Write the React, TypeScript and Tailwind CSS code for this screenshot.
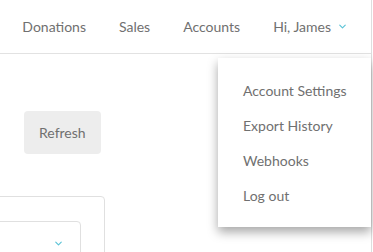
import { ChevronDown } from "lucide-react";

const navItems = ["Donations", "Sales", "Accounts"];
const menuItems = ["Account Settings", "Export History", "Webhooks", "Log out"];

export default function App() {
  return (
    <div
      className="relative h-[252px] w-[373px] overflow-hidden bg-white text-[#707070]"
      style={{ fontFamily: "Lato, 'Open Sans', sans-serif" }}
    >
      <div className="border-r border-[#dedede] h-full w-[372px]">
        <header className="flex h-[54px] items-center justify-end border-b border-[#e2e2e2] pr-[23px] text-[14px]">
          <nav className="flex items-center gap-[33px]">
            {navItems.map((item) => (
              <span key={item}>{item}</span>
            ))}
            <span className="flex items-center gap-[6px]">
              Hi, James
              <ChevronDown className="size-[11px] text-[#5bc3d6]" strokeWidth={2.5} />
            </span>
          </nav>
        </header>

        <main className="pl-[24px] pt-[57px]">
          <button className="h-[43px] rounded-[4px] bg-[#ededed] px-[15px] text-[14px] text-[#707070]">
            Refresh
          </button>
        </main>

        <div className="ml-[-4px] mt-[42px] h-[80px] w-[109px] rounded-tr-[4px] border border-[#e0e0e0] pr-[24px] pt-[24px]">
          <div className="flex h-[60px] w-[84px] items-start justify-end rounded-tr-[4px] border border-[#e0e0e0] pr-[16px] pt-[16px]">
            <ChevronDown className="size-[11px] text-[#5bc3d6]" strokeWidth={2.5} />
          </div>
        </div>
      </div>

      <div className="absolute left-[218px] top-[58px] w-[153px] bg-white pb-[21px] pl-[25px] pt-[22px] text-[14px] shadow-[0_5px_10px_rgba(0,0,0,0.35)]">
        <ul className="flex flex-col gap-[14px]">
          {menuItems.map((item) => (
            <li key={item} className="leading-[21px]">
              {item}
            </li>
          ))}
        </ul>
      </div>
    </div>
  );
}
